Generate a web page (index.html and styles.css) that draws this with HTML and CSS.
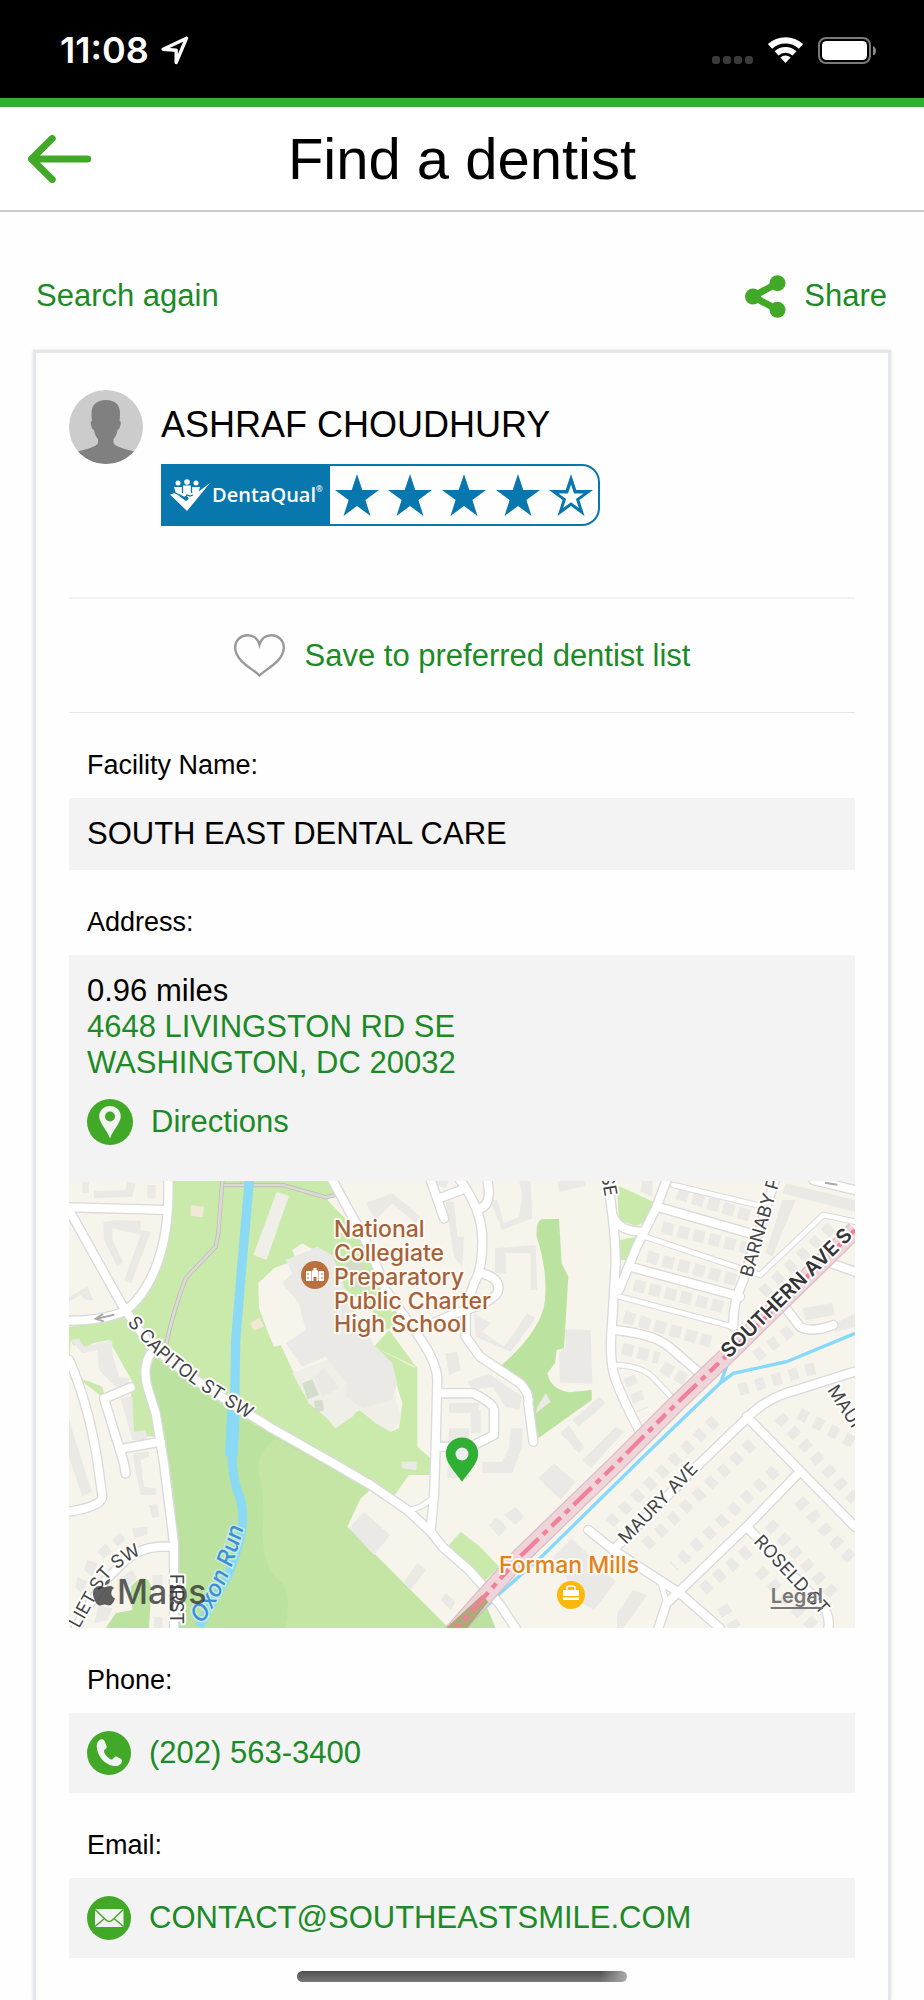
FILE: index.html
```html
<!DOCTYPE html>
<html lang="en">
<head>
<meta charset="utf-8">
<meta name="viewport" content="width=device-width, initial-scale=1">
<title>Find a dentist</title>
<link rel="stylesheet" href="styles.css">
</head>
<body>
<div class="app">
  <div class="status">
    <div class="status-side">
      <span class="clock">11:08</span>
      <svg width="28" height="29" viewBox="0 0 28 29" aria-hidden="true"><path d="M25.500 2.200 2.200 13.200 15.200 14.200 15.200 26.500z" fill="none" stroke="#fff" stroke-width="3.400" stroke-linejoin="round"/></svg>
    </div>
    <div class="status-side status-right">
      <svg width="41" height="27" viewBox="0 0 41 27" aria-hidden="true"><g fill="#3a3a3a"><rect x="0" y="19" width="8" height="8" rx="3"/><rect x="11" y="19" width="8" height="8" rx="3"/><rect x="22" y="19" width="8" height="8" rx="3"/><rect x="33" y="19" width="8" height="8" rx="3"/></g></svg>
      <svg width="35" height="27" viewBox="0 0 35 27" aria-hidden="true"><g fill="none" stroke="#fff"><path d="M2 9.400a22.700 22.700 0 0 1 31 0" stroke-width="6.200"/><path d="M8.500 16.400a13.200 13.200 0 0 1 18 0" stroke-width="5.800"/></g><path d="M12.400 20.600a7.500 7.500 0 0 1 10.200 0L17.500 26z" fill="#fff"/></svg>
      <svg width="60" height="27" viewBox="0 0 60 27" aria-hidden="true"><rect x="1" y="1" width="51" height="25" rx="7" fill="none" stroke="#7a7a7a" stroke-width="2"/><rect x="4" y="4" width="45" height="19" rx="4.500" fill="#fff"/><path d="M55 9c4 1.500 4 8 0 9.500z" fill="#8a8a8a"/></svg>
    </div>
  </div>

  <header class="header">
    <button class="back" type="button" aria-label="Back">
      <svg width="63" height="48" viewBox="0 0 63 48" aria-hidden="true"><path d="M59.700 24H3.500M24.200 3.500 3.500 24l20.700 20.500" fill="none" stroke="#42a928" stroke-width="7" stroke-linecap="round" stroke-linejoin="round"/></svg>
    </button>
    <h1 class="title">Find a dentist</h1>
  </header>

  <nav class="actions">
    <a class="link" href="#search">Search again</a>
    <button class="link share" type="button">
      <svg width="41" height="43" viewBox="0 0 41 43" aria-hidden="true"><g fill="#42a928"><circle cx="8" cy="21.500" r="8"/><circle cx="32.500" cy="8.200" r="8"/><circle cx="32.500" cy="34.800" r="8"/></g><path d="M32 8.500 8 21.500 32 34.500" fill="none" stroke="#42a928" stroke-width="7"/></svg>
      <span>Share</span>
    </button>
  </nav>

  <main class="card">
    <section class="provider">
      <svg class="avatar" width="74" height="74" viewBox="0 0 74 74" aria-hidden="true">
        <defs><clipPath id="round"><circle cx="37" cy="37" r="37"/></clipPath></defs>
        <g clip-path="url(#round)"><rect width="74" height="74" fill="#ccc"/><path d="M37 10c9 0 14 5 14 13 0 3 0 5-.5 8 1.500 0 1.500 2 1 4s-1.500 5-3 5c-.5 4-2 7-4 9v4c2 4 12 6 23 9v14H6V62c12-3 21-5 23-9v-4c-2-2-3.500-5-4-9-1.500 0-2.500-3-3-5s-.5-4 1-4c-.5-3-.5-5-.5-8 0-8 5.500-13 14.500-13z" fill="#808080"/></g>
      </svg>
      <div class="provider-info">
        <h2 class="provider-name">ASHRAF CHOUDHURY</h2>
        <div class="rating">
          <div class="rating-brand">
            <svg width="40" height="32" viewBox="0 0 40 32" aria-hidden="true"><g fill="#fff"><circle cx="8" cy="4" r="2.500"/><circle cx="17" cy="3" r="2.800"/><circle cx="26" cy="4" r="2.500"/><path d="M4 8h8l1-1.500h8L22 8h8l-2 7-5 5h-4l-2-3-4 1-7-3z"/><path d="M0 15.500 5 14l11 8L40 4 17 32z"/></g><path d="m5 14 5 2 5 3 2-3 3 1 3-1M12.500 6v8M21.500 6v8" fill="none" stroke="#0877ae" stroke-width="1.300"/></svg>
            <span class="brand-name">DentaQual<sup class="brand-mark">®</sup></span>
          </div>
          <div class="stars" role="img" aria-label="4 out of 5 stars">
            <svg width="44" height="42" viewBox="0 0 44 42"><path class="star" d="M22 0l5.300 16H44L30.400 26 35.500 42 22 32 8.500 42 13.600 26 0 16h16.700z"/></svg>
            <svg width="44" height="42" viewBox="0 0 44 42"><path class="star" d="M22 0l5.300 16H44L30.400 26 35.500 42 22 32 8.500 42 13.600 26 0 16h16.700z"/></svg>
            <svg width="44" height="42" viewBox="0 0 44 42"><path class="star" d="M22 0l5.300 16H44L30.400 26 35.500 42 22 32 8.500 42 13.600 26 0 16h16.700z"/></svg>
            <svg width="44" height="42" viewBox="0 0 44 42"><path class="star" d="M22 0l5.300 16H44L30.400 26 35.500 42 22 32 8.500 42 13.600 26 0 16h16.700z"/></svg>
            <svg width="44" height="42" viewBox="0 0 44 42"><path class="star" fill-rule="evenodd" d="M22 0l5.300 16H44L30.400 26 35.500 42 22 32 8.500 42 13.600 26 0 16h16.700zM22 10.500l-3 9H9.500l7.600 5.500-3 9 7.900-5.800 7.900 5.800-3-9 7.600-5.500H25z"/></svg>
          </div>
        </div>
      </div>
    </section>

    <div class="save-row">
      <button class="link save" type="button">
        <svg width="51" height="43" viewBox="0 0 51 43" aria-hidden="true"><path d="M25.500 41.500C19 35 1.200 27 1.200 13.500 1.200 6 7 1.200 13.500 1.200c6 0 10.500 3.800 12 9.300 1.500-5.500 6-9.300 12-9.300 6.500 0 12.300 4.800 12.300 12.300C49.800 27 32 35 25.500 41.500z" fill="none" stroke="#999" stroke-width="2.400"/></svg>
        <span>Save to preferred dentist list</span>
      </button>
    </div>

    <section>
      <h3 class="label">Facility Name:</h3>
      <p class="field">SOUTH EAST DENTAL CARE</p>
    </section>

    <section>
      <h3 class="label">Address:</h3>
      <div class="field address">
        <p>0.96 miles</p>
        <a class="link address-link" href="#map">4648 LIVINGSTON RD SE<br>WASHINGTON, DC 20032</a>
        <a class="link directions" href="#directions">
          <svg width="46" height="46" viewBox="0 0 46 46" aria-hidden="true"><circle cx="23" cy="23" r="23" fill="#42a928"/><path fill="#f3f3f3" fill-rule="evenodd" d="M23 7c6 0 10.800 4.500 10.800 10.300C33.800 24 26 31 23 39.500 20 31 12.200 24 12.200 17.300 12.200 11.500 17 7 23 7zm0 5.500a5 5 0 1 0 0 10 5 5 0 0 0 0-10z"/></svg>
          <span>Directions</span>
        </a>
      </div>
      <div class="map" id="map">
        <svg class="map-art" viewBox="0 0 786 447" preserveAspectRatio="xMidYMid slice" role="img" aria-label="Map of the area around the dentist">
          <defs>
            <g id="wide">
              <path d="M0 90 165 385 240 490Q330 570 480 665L600 740 785 845 905 915 1015 990 1085 1055 1120 1100 1200 1170 1240 1215 1290 1270 1340 1345"/>
              <path d="M298 0Q302 150 265 250T165 395Q100 422 0 422M0 82 295 90"/>
              <path d="M245 520Q220 560 235 620L260 700 285 850 315 1090V1345"/>
              <path d="M0 540Q55 660 85 840L100 950Q98 980 0 995M105 655 165 850 170 880M165 805 275 785M185 622 115 652"/>
              <path d="M315 1100H270Q210 1105 170 1140L110 1200 50 1290 20 1345"/>
              <path d="M790 0 850 110Q900 190 950 330L1050 470Q1105 550 1105 600L1100 800 1095 950 1085 1050"/>
              <path d="M1085 0 1125 115M1112 55 1190 25M1173 0Q1240 90 1240 180T1215 310L1190 390V470L1233 530 1353 610Q1383 640 1378 670L1393 785M1235 85Q1270 70 1255 0M1240 280Q1293 295 1288 330T1160 400L1090 430"/>
              <path d="M1105 640H1213Q1275 670 1275 690V765L1205 800H1105"/>
              <path d="M1615 0Q1640 150 1640 250L1630 420Q1618 540 1640 600T1710 750"/>
              <path d="M1793 0 1763 80 1703 200 1650 330M1633 110Q1650 155 1723 155"/>
              <path d="M1763 80 2043 160M1683 260 2013 350M1633 450Q1750 460 1800 500L1893 580"/>
              <path d="M2118 0 2023 300Q1990 370 1993 440M2233 0 2358 30M2273 245 2358 275M2143 375 2193 440Q2225 460 2293 435"/>
              <path d="M2358 575 2150 640Q2080 665 2033 715L1893 850 1633 1110M1558 1050 1633 1110 1833 1240 1953 1345M2033 710 2358 1040"/>
              <path d="M2188 880 2033 1040 1793 1270 1768 1345M2033 1040 2253 1270Q2285 1300 2278 1345"/>
            </g>
            <g id="narrow">
              <path d="M1813 15 2063 75M1728 170 2073 285 2263 105 2358 125M1653 350 1993 440M1633 555Q1720 555 1760 600L1820 665M1773 1200 1793 1270M1020 990Q1060 985 1095 950"/>
            </g>
            <path id="p-capitol" d="M58 142 82 169Q115 201 188 243"/>
            <path id="p-southern" d="M660 178 800 40"/>
            <path id="p-oxon" d="M133 443Q160 407 176 341"/>
            <path id="p-oliet" d="M10 448 36 401Q50 382 84 368"/>
          </defs>
          <rect width="786" height="447" fill="#f7f4eb"/>
          <g transform="translate(0 -1) scale(.33333)">
            <path fill="#c9eaaa" d="M305 0H785L800 45 775 60 900 190 970 370 960 450 1045 565V800L1085 835V885H1020L978 945 900 930 480 700 245 520 165 395 270 240ZM0 440 165 410 250 520 225 580 245 700 262 770 195 765 185 660 190 605 120 480 70 490 30 525 5 480 0 560ZM50 600 100 620 110 660 35 600ZM1643 15 1753 65 1730 125 1700 138 1650 120ZM1653 180 1703 170 1678 240H1655ZM1656 270H1668L1656 300ZM1140 1095 1175 1055 1233 1100 1290 1160 1245 1205Z"/>
            <path fill="#f7f4eb" d="M20 480 60 520 110 610 40 600 0 560ZM670 210 700 190 725 205 770 215 830 330 900 380 960 450 915 500 1040 560 985 620 1000 670 990 745 965 755 870 690 800 745 770 710 720 670 680 590 635 495 615 500 600 465 570 385 568 310 615 265 680 240Z"/>
            <path fill="#efeee7" d="M670 580 800 530 870 680 850 710 800 745 770 710 720 670ZM860 680 980 650 995 720 965 755 920 730ZM623 35 660 48 593 240 553 225Z"/>
            <path fill="#f3e8d5" d="M365 76 405 80 402 112 365 108ZM543 430 572 412 585 440 556 452Z"/>
            <path fill="#c9eaaa" d="M915 500 1040 565 985 620 940 545ZM860 300 920 320 900 350 850 340ZM925 420 980 390 1000 430 950 450Z"/>
            <path fill="#bbe29f" d="M250 525 480 690 900 930 835 1040 1020 1225 1140 1345H330L315 1090 285 850 238 620ZM110 1345 140 1300 190 1290 185 1220Q230 1170 247 1220L240 1345ZM1418 118 1470 117 1478 250 1498 290 1485 505 1463 510 1458 550 1435 580Q1445 630 1503 637L1568 630V660L1408 775 1378 660 1293 560Q1420 450 1428 360T1403 170Q1400 125 1418 118ZM1255 1285 1280 1345H1180Z"/>
            <path fill="#c4e5a3" d="M620 775Q560 820 570 880 590 960 580 1060 585 1180 640 1210 670 1260 645 1345H1145L1020 1225 835 1040 900 930Z"/>
            <path fill="#d3ddca" d="M700 610 730 598 750 645 715 658ZM735 662 760 660 765 690 740 700ZM830 245 880 250 900 330 840 320Z"/>
            <path fill="#f7f4eb" d="M905 930 978 945 1020 885 1085 885V1050L1200 1170 1240 1215 1140 1345 1020 1225 930 1130 835 1040 875 955Z"/>
            <g fill="#eae9e6">
              <path d="M650 240 745 200 790 225 830 330 860 400 915 495 970 550 985 610 970 660 880 685 830 650 835 610 770 530 700 560 650 490 710 450 690 370 640 310 670 280ZM735 590 765 565 810 625 760 650Z"/>
              <path d="M40 5H60V40H40ZM75 33 170 30 175 5 200 10 190 50 75 55ZM235 15H260V55H235ZM103 125 130 122 130 180 162 245 145 260 105 180ZM130 120 215 122 215 150 245 155 187 310 165 303 215 165 130 145ZM0 350 55 320 73 360 50 360 35 345 0 365ZM5 480 30 475 45 500 130 480 130 520 150 590 180 595 180 625 140 620 90 570 85 510 40 520ZM155 655 190 650 195 755 230 750 235 780 190 780ZM0 720 68 935 40 950 0 830ZM190 820 240 815 240 830 215 840 225 920 262 925 260 945 215 945ZM240 975 265 972 270 1010 250 1015ZM190 1045 235 1040 235 1065 195 1075ZM130 1080 155 1055 170 1080 145 1100ZM85 1115 110 1090 130 1115 105 1135ZM55 1140 85 1150 70 1190 45 1170ZM25 1190 55 1205 40 1245 18 1220ZM250 1185H280V1220H250ZM255 1310H280V1345H255ZM145 1200 190 1170 205 1195 150 1240ZM90 1275 130 1285 115 1320 75 1330Z"/>
              <path d="M890 70 970 40 1055 110 1040 130 970 70 920 120ZM1060 0H1140L1130 25ZM1130 65 1155 65 1165 170 1185 170 1180 260 1155 230ZM1130 520 1165 515 1175 570 1140 585ZM1263 60 1285 60 1305 130 1350 110 1360 45 1350 0H1385L1390 115 1300 150ZM1278 205 1400 195 1405 330H1385V220H1310V280H1278ZM1215 400 1265 430 1240 455 1305 500 1375 400 1400 415 1325 515 1220 470ZM1195 605 1260 580 1300 610 1360 650 1350 690 1310 680 1270 620 1210 630ZM1488 448 1565 450 1570 612 1473 607 1470 520 1490 500ZM1465 0H1550V18L1470 35ZM1405 680 1430 640 1445 665 1400 700ZM998 845H1043V870L998 865ZM885 995 963 1065 915 1125 840 1045ZM1045 1150 1070 1170 1025 1230 1005 1205ZM1115 1260 1130 1240 1160 1265 1145 1290ZM1140 668H1230V700H1140ZM1140 745H1200V895H1135ZM1205 690H1235V760H1205ZM1325 745H1360V800L1330 880H1300V845L1320 805ZM1240 845H1305V880H1240ZM1475 760 1500 735 1545 800 1530 820ZM1510 720 1590 650 1610 670 1530 740ZM1540 840 1640 740 1665 755 1565 865ZM1408 895 1455 850 1520 905 1475 960ZM1260 1035 1285 1010 1315 1045 1290 1070ZM1305 1005 1340 980 1365 1010 1340 1035ZM1453 1130 1508 1075 1640 1205 1575 1290 1540 1270ZM1645 1300 1690 1230 1735 1245 1690 1310 1660 1345H1643ZM2150 10 2358 60V95L2140 40ZM2140 60H2180L2110 230 2090 220ZM2200 385 2290 370 2298 405 2210 420ZM2290 435 2358 400V440L2300 455ZM1720 0H1750V50L1715 35Z"/>
            </g>
            <g fill="none" stroke="#eae9e6" stroke-width="36">
              <path stroke-dasharray="34 14" d="M1825 40 2050 110M1780 142 2040 205M1735 230 2000 300M1695 315 1975 385M1665 410 1925 485M1660 505 1770 535M1780 560 1850 600"/>
              <path stroke-dasharray="28 24" d="M2080 340 2300 130M2010 630 2250 560M2060 530 2180 440M1680 590 1720 690M1940 720 1610 1040M2050 790 1715 1110M2120 870 1815 1160M2040 1110 1890 1240M2130 710 2358 960M2190 700 2358 790M2100 1030 2310 1260M2190 960 2358 1150M1960 1280 2000 1345M2070 1170 2240 1345"/>
            </g>
            <path fill="none" stroke="#bfbdb8" stroke-width="13" d="M460 0 448 160 440 200 350 295Q310 400 290 500M465 15H640L770 52 800 45"/>
            <path fill="none" stroke="#dad9d3" stroke-width="8" d="M460 0 448 160 440 200 350 295Q310 400 290 500M465 15H640L770 52 800 45"/>
            <path fill="none" stroke="#8adaf6" stroke-width="28" d="M541 0 520 240 500 480 497 660"/>
            <path fill="none" stroke="#8adaf6" stroke-width="38" d="M495 660 487 830"/>
            <path fill="none" stroke="#8adaf6" stroke-width="27" d="M490 800Q485 890 515 960 530 1020 510 1090L480 1180 390 1340" stroke-linejoin="round"/>
            <path fill="none" stroke="#86d9fb" stroke-width="10" d="M2358 460 2153 545 1993 580 1953 610 1890 670 1713 840 1423 1125 1293 1240 1185 1345M1978 545 1955 608"/>
            <g fill="none" stroke="#d9dadc" stroke-linecap="round" stroke-linejoin="round"><use href="#wide" stroke-width="32"/><use href="#narrow" stroke-width="20"/></g>
            <g fill="none" stroke="#fff" stroke-linecap="round" stroke-linejoin="round"><use href="#wide" stroke-width="24"/><use href="#narrow" stroke-width="14"/></g>
            <path fill="none" stroke="#d8bcc2" stroke-width="54" d="M2358 150 1980 520 1823 670 1643 850 1353 1130 1150 1358"/>
            <path fill="none" stroke="#efd4da" stroke-width="47" d="M2358 150 1980 520 1823 670 1643 850 1353 1130 1150 1358"/>
            <path fill="#b0a878" d="M1240 1244 1258 1266 1195 1345H1130Z"/>
            <path fill="none" stroke="#f0819a" stroke-width="13" stroke-dasharray="75 18 18 18 38 18 18 18" d="M2358 150 1980 520 1823 670 1643 850 1353 1130 1150 1358"/>
            <path fill="none" stroke="#aaa" stroke-width="6" d="M136 404 82 416M102 402 80 416 104 424M2268 8 2305 14"/>
          </g>
          <g class="street">
            <text><textPath href="#p-capitol">S CAPITOL ST SW</textPath></text>
            <text class="street-major"><textPath href="#p-southern">SOUTHERN AVE S</textPath></text>
            <text><textPath href="#p-oliet">LIET ST SW</textPath></text>
            <text transform="translate(683 97) rotate(-74)">BARNABY P</text>
            <text transform="translate(557 364) rotate(-46)">MAURY AVE</text>
            <text transform="translate(684 361) rotate(47)">ROSELD CT</text>
            <text transform="translate(758 209) rotate(57)">MAURY</text>
            <text transform="translate(101 393) rotate(90)">FIRST</text>
            <text transform="translate(532 -6) rotate(80)">SE</text>
          </g>
          <text class="water"><textPath href="#p-oxon">Oxon Run</textPath></text>
          <circle cx="246" cy="94" r="14" fill="#b8703f"/>
          <path fill="#fff" fill-rule="evenodd" d="M237 90h5v10h-5zM250 90h5v10h-5zM242.500 90l2-1v-2h3v2l2 1v10h-2v-4h-3v4h-2zM238.500 92v2h1v-2zm0 4v2h1v-2zm14-4v2h1v-2zm0 4v2h1v-2z"/>
          <g class="poi poi-school">
            <text x="265" y="56">National</text>
            <text x="265" y="80">Collegiate</text>
            <text x="265" y="104">Preparatory</text>
            <text x="265" y="128">Public Charter</text>
            <text x="265" y="151">High School</text>
          </g>
          <text class="poi poi-shop" x="430" y="392">Forman Mills</text>
          <circle cx="502" cy="414" r="14" fill="#fdb90b"/>
          <path d="M494 409h16v6h-16zM494 416.500h16v2.500h-16z" fill="#fff"/><path d="M498 409v-2q0-2 2-2h4q2 0 2 2v2" fill="none" stroke="#fff" stroke-width="1.500"/>
          <path fill="#2fb034" fill-rule="evenodd" d="M393 256.500c9 0 16.200 7 16.200 16.300 0 9-8.200 17.200-16.200 28-8-10.800-16.200-19-16.200-28 0-9.300 7.200-16.300 16.200-16.300z"/><circle cx="393" cy="273" r="6.500" fill="#efefef"/>
          <path fill="#333" fill-opacity=".78" d="M41 398c.3 3-2 6-5 6-.3-3 2-5.600 5-6zM45 407c-4 2.500-3.500 8.500 1 10.500-1 3.500-3.500 7-6 7-2 0-2.500-1-4.500-1s-2.700 1-4.500 1c-4 0-7-8-7-12 0-5.500 3.500-7.500 6.500-7.500 2 0 3.500 1.200 5 1.200s3-1.300 5.500-1.300c1.500 0 3 .6 4 2.100z"/>
          <text class="maps-logo" x="48" y="423">Maps</text>
        </svg>
        <a class="legal" href="#legal">Legal</a>
      </div>
    </section>

    <section>
      <h3 class="label">Phone:</h3>
      <div class="field">
        <a class="link contact" href="tel:2025633400">
          <svg width="44" height="44" viewBox="0 0 44 44" aria-hidden="true"><circle cx="22" cy="22" r="22" fill="#42a928"/><path fill="#f3f3f3" d="M13.500 8.500c2.500-1 4 .5 4.700 3l1.500 4c.6 2-3 3-2.700 5 .5 3 5 7.500 7.500 8 2 .4 2.500-3.500 4.800-3l4 2c2 1 2 2.500 1 4.500-1 2.300-4 3.500-7.500 3C18 34 10 25 9.700 15.500c0-3.500 1.500-6 3.800-7z"/></svg>
          <span>(202) 563-3400</span>
        </a>
      </div>
    </section>

    <section>
      <h3 class="label">Email:</h3>
      <div class="field">
        <a class="link contact" href="mailto:CONTACT@SOUTHEASTSMILE.COM">
          <svg width="44" height="44" viewBox="0 0 44 44" aria-hidden="true"><circle cx="22" cy="22" r="22" fill="#42a928"/><rect x="8" y="13" width="28.500" height="18" fill="#f3f3f3"/><path d="M8 13.500 19 24q3.200 3 6.400 0l11-10.500M8 30.500l9.500-8M36.500 30.500l-9.500-8" fill="none" stroke="#42a928" stroke-width="1.500"/></svg>
          <span>CONTACT@SOUTHEASTSMILE.COM</span>
        </a>
      </div>
    </section>
  </main>
</div>
<div class="home-indicator"></div>
</body>
</html>
```

FILE: styles.css
```css
* {
  box-sizing: border-box;
}

body,
h1,
h2,
h3,
p {
  margin: 0;
  font-weight: 400;
}

body {
  background: #fefefe;
  color: #000;
  font-family: "Liberation Sans", Arial, sans-serif;
  font-size: 31px;
  line-height: 36px;
}

button {
  padding: 0;
  border: 0;
  background: none;
  font: inherit;
}

svg {
  display: block;
  flex: none;
}

.app {
  display: flex;
  flex-direction: column;
  min-height: 100vh;
}

.status {
  display: flex;
  justify-content: space-between;
  padding: 30px 46px 28px 60px;
  background: #000;
  color: #fff;
}

.status-side {
  display: flex;
  align-items: center;
  gap: 12px;
  height: 40px;
}

.status-right {
  gap: 15px;
}

.clock {
  font-family: Inter, sans-serif;
  font-size: 36px;
  font-weight: 600;
}

.header {
  display: grid;
  grid-template-columns: 1fr auto 1fr;
  align-items: center;
  padding: 17px 28px;
  border-top: 9px solid #2fb034;
  border-bottom: 2px solid #ccc;
  background: #fff;
}

.back {
  justify-self: start;
}

.title {
  font-size: 58px;
  line-height: 69px;
}

.actions {
  display: flex;
  align-items: center;
  justify-content: space-between;
  padding: 62px 37px 32px 36px;
}

.link {
  color: #1c8a26;
  text-decoration: none;
}

.share {
  display: flex;
  align-items: center;
  gap: 18px;
  height: 44px;
}

.card {
  flex: 1;
  margin: 0 33px;
  padding: 37px 33px 42px;
  border: 3px solid #e3e7ec;
  border-bottom: 0;
  background: #fefefe;
  box-shadow: 0 0 3px #dfe2e4;
}

.provider {
  display: flex;
  gap: 18px;
  padding-bottom: 71px;
}

.provider-info {
  padding-top: 13px;
}

.provider-name {
  font-size: 36px;
  line-height: 44px;
}

.rating {
  display: flex;
  width: 439px;
  max-width: 100%;
  height: 62px;
  margin-top: 17px;
  overflow: hidden;
  border: 2px solid #0877ae;
  border-left: 0;
  border-radius: 0 18px 18px 0;
}

.rating-brand {
  display: flex;
  align-items: center;
  gap: 2px;
  width: 169px;
  padding-left: 9px;
  background: #0877ae;
  color: #fff;
}

.brand-name {
  display: flex;
  font-family: "Open Sans", sans-serif;
  font-size: 20px;
  font-weight: 600;
  line-height: 28px;
}

.brand-mark {
  font-size: 8px;
  line-height: 16px;
}

.stars {
  display: flex;
  flex: 1;
  align-items: center;
  justify-content: space-around;
}

.star {
  fill: #0877ae;
}

.save-row {
  display: flex;
  justify-content: center;
  padding: 35px 0;
  border-top: 2px solid #f2f2f2;
  border-bottom: 1px solid #e6e6e6;
}

.save {
  display: flex;
  align-items: center;
  gap: 20px;
}

.label {
  padding: 34px 18px 15px;
  font-size: 27px;
}

.field {
  padding: 18px;
  background: #f3f3f3;
}

.address {
  padding-bottom: 36px;
}

.address-link {
  display: block;
}

.directions,
.contact {
  display: flex;
  align-items: center;
  gap: 18px;
}

.directions {
  margin-top: 18px;
}

.map {
  position: relative;
}

.map-art {
  width: 100%;
  height: auto;
  font-family: Inter, sans-serif;
}

.street {
  fill: #444;
  stroke: #fff;
  stroke-width: 4px;
  stroke-linejoin: round;
  paint-order: stroke;
  font-size: 18px;
}

.street-major {
  fill: #333;
  font-size: 20px;
  font-weight: 600;
}

.water {
  fill: #3f8fd8;
  stroke: #c6ecdc;
  stroke-width: 3px;
  paint-order: stroke;
  font-size: 23px;
  font-style: italic;
  font-weight: 500;
}

.poi {
  stroke: #fbf9f3;
  stroke-width: 4px;
  stroke-linejoin: round;
  paint-order: stroke;
  font-size: 23px;
  font-weight: 500;
}

.poi-school {
  fill: #a5623a;
}

.poi-shop {
  fill: #e0831a;
}

.maps-logo {
  fill: #333;
  fill-opacity: 0.78;
  font-size: 34px;
  font-weight: 500;
}

.legal {
  position: absolute;
  right: 32px;
  bottom: 20px;
  color: #777;
  font-family: Inter, sans-serif;
  font-size: 20px;
  font-weight: 600;
  line-height: 24px;
  text-underline-offset: 4px;
}

.home-indicator {
  position: fixed;
  bottom: 18px;
  left: 50%;
  width: 330px;
  height: 11px;
  margin-left: -165px;
  border-radius: 6px;
  background: linear-gradient(90deg, transparent 92%, #aaa), linear-gradient(#505050, #787878);
}
```
